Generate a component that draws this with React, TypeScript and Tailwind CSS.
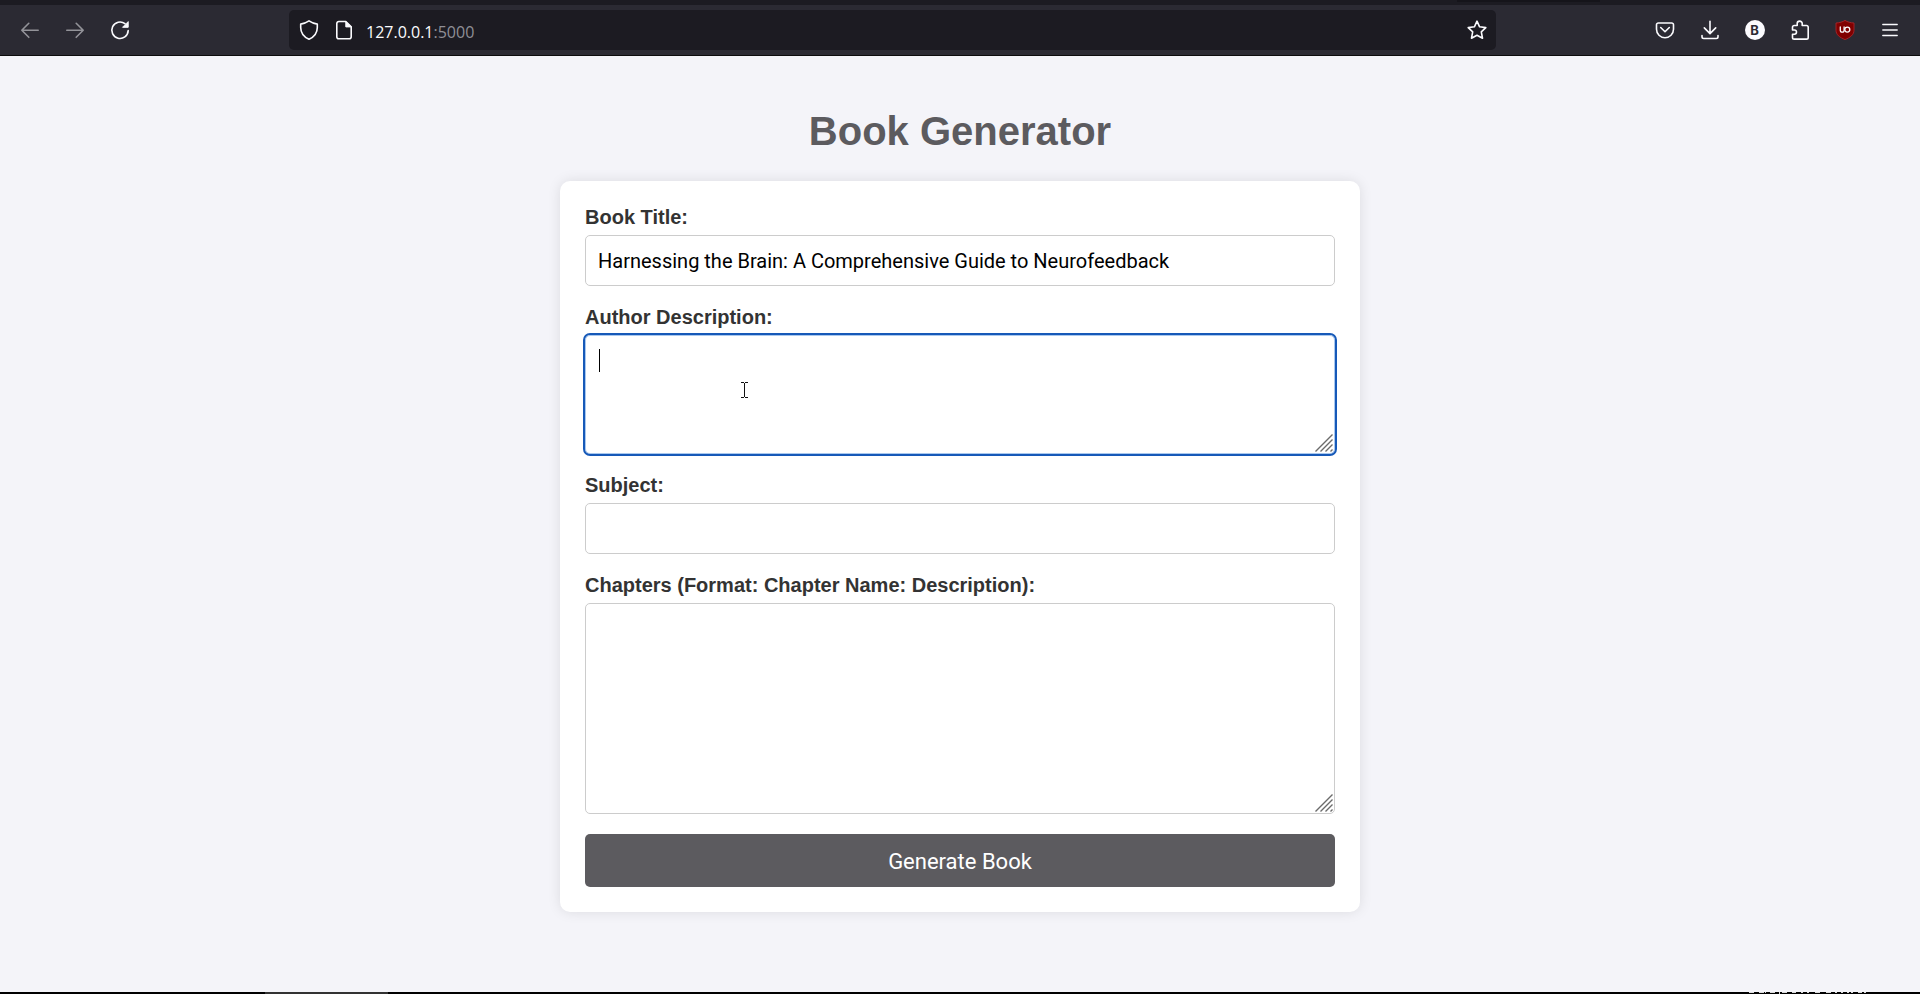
import type { ReactNode } from 'react';

const fieldClass =
  'block w-full rounded-[5px] border border-[#cccccc] bg-white px-3 pt-[13px] pb-[11px] font-[Roboto,sans-serif] text-[20px] leading-[25px] text-black outline-none';

function ToolButton({ label, children }: { label: string; children: ReactNode }) {
  return (
    <button type="button" aria-label={label} className="flex h-10 w-[45px] items-center justify-center text-[#fbfbfe]">
      {children}
    </button>
  );
}

function Icon({ children }: { children: ReactNode }) {
  return (
    <svg
      viewBox="0 0 20 20"
      className="size-5 shrink-0"
      fill="none"
      stroke="currentColor"
      strokeWidth="1.6"
      strokeLinecap="round"
      strokeLinejoin="round"
      aria-hidden="true"
    >
      {children}
    </svg>
  );
}

function ResizeGrip() {
  return (
    <svg
      viewBox="0 0 18 18"
      className="pointer-events-none absolute right-0.5 bottom-0.5 size-[18px]"
      stroke="#6b6b6b"
      strokeWidth="1.4"
      aria-hidden="true"
    >
      <path d="M.5 17.5l17-17M5.5 17.5l12-12M10.5 17.5l7-7M15.5 17.5l2-2" />
    </svg>
  );
}

function Field({ id, label, children }: { id: string; label: string; children: ReactNode }) {
  return (
    <div>
      <label htmlFor={id} className="mb-1.5 block text-[20px] leading-[23px] font-bold text-[#333333]">
        {label}
      </label>
      <div className="relative">{children}</div>
    </div>
  );
}

function BrowserBar() {
  return (
    <header>
      <div className="flex h-[5px] justify-end bg-[#1c1b22] pr-[320px]">
        <div className="h-0.5 w-[143px] bg-[#15141a]" />
      </div>
      <div className="flex h-[51px] items-center border-b border-[#0c0c0d] bg-[#2b2a33] pr-2 pl-[7px]">
        <div className="flex text-[#fbfbfe]">
          <ToolButton label="Back">
            <span className="opacity-50">
              <Icon>
                <path d="M18.2 10.3H1.8M8.8 3.3l-7 7 7 7" />
              </Icon>
            </span>
          </ToolButton>
          <ToolButton label="Forward">
            <span className="opacity-50">
              <Icon>
                <path d="M1.8 10.3h16.4M11.2 3.3l7 7-7 7" />
              </Icon>
            </span>
          </ToolButton>
          <ToolButton label="Reload">
            <Icon>
              <path d="M18.2 10.6A8.2 8.2 0 1 1 15 3.7" />
              <path d="M18.2 2v5.3h-5.3z" fill="currentColor" strokeWidth="1" />
            </Icon>
          </ToolButton>
        </div>
        <div className="mr-[146px] ml-[147px] flex h-10 min-w-0 flex-1 items-center rounded-[5px] bg-[#1c1b22] pr-[9px] pl-2.5 text-[#fbfbfe]">
          <Icon>
            <path d="M10 .9c2.6 1.8 5.2 2.8 8.3 3.2v3.3c0 5-2.700 9.200-8.300 11.800C4.400 16.600 1.700 12.400 1.700 7.400V4.100C4.800 3.700 7.400 2.700 10 .900z" />
          </Icon>
          <span className="ml-[15px] flex">
            <Icon>
              <path d="M4.800 1.500h7l5.400 5.400v9.800a2 2 0 0 1-2 2H4.800a2 2 0 0 1-2-2V3.500a2 2 0 0 1 2-2z" />
              <path d="M11.800 1.800v5.100h5.100z" fill="currentColor" strokeWidth="1" />
            </Icon>
          </span>
          <p className="ml-3 flex-1 pt-[3px] font-['Open_Sans',sans-serif] text-[16px] leading-6">
            127.0.0.1<span className="text-[#8f8f96]">:5000</span>
          </p>
          <button type="button" aria-label="Bookmark this page">
            <Icon>
              <path d="M10 1.200l2.600 5.600 6.200.8-4.500 4.300 1.200 6.300L10 15.200l-5.500 3 1.200-6.300L1.200 7.600l6.200-.8z" />
            </Icon>
          </button>
        </div>
        <div className="flex">
          <ToolButton label="Save to Pocket">
            <Icon>
              <path d="M3.300 3h13.400a1.800 1.800 0 0 1 1.800 1.800v4.400a8.500 8.500 0 0 1-17 0V4.800A1.800 1.800 0 0 1 3.300 3z" />
              <path d="M5.700 7.500L10 11.700l4.300-4.200" />
            </Icon>
          </ToolButton>
          <ToolButton label="Downloads">
            <Icon>
              <path d="M10 1.200v12.300M4.300 7.900l5.700 5.700 5.700-5.700M2 15.500v1.300A1.700 1.700 0 0 0 3.700 18.500h12.600a1.700 1.700 0 0 0 1.700-1.700v-1.300" />
            </Icon>
          </ToolButton>
          <ToolButton label="Account">
            <span className="flex size-5 items-center justify-center rounded-full bg-[#fbfbfe] font-[Inter,sans-serif] text-[13px] leading-none font-bold text-[#2b2a33]">
              B
            </span>
          </ToolButton>
          <ToolButton label="Extensions">
            <Icon>
              <path d="M7.200 5.500V3.600a2.500 2.500 0 0 1 5 0v1.900h4.300a1.700 1.700 0 0 1 1.700 1.700v10.200a1.700 1.700 0 0 1-1.700 1.700H4.200a1.700 1.700 0 0 1-1.700-1.700v-3.200h1.900a2.100 2.100 0 0 0 0-4.200H2.500V7.200a1.700 1.700 0 0 1 1.700-1.700z" />
            </Icon>
          </ToolButton>
          <ToolButton label="uBlock Origin">
            <Icon>
              <path
                d="M10 .500C12.500 2 15.500 2.800 19 3v7.200c0 4.600-3.800 7.300-9 9.400-5.200-2.100-9-4.800-9-9.400V3c3.500-.200 6.500-1 9-2.500z"
                fill="#800000"
                stroke="#a8262a"
                strokeWidth=".9"
              />
              <path d="M5.300 7v3.300a1.900 1.900 0 0 0 3.800 0V7" strokeWidth="1.300" />
              <circle cx="12.300" cy="9.600" r="2.500" strokeWidth="1.300" />
            </Icon>
          </ToolButton>
          <ToolButton label="Open application menu">
            <Icon>
              <path d="M2.800 4.500h14.400M2.800 10h14.400M2.800 15.500h14.400" strokeWidth="1.400" />
            </Icon>
          </ToolButton>
        </div>
      </div>
    </header>
  );
}

function BottomEdge() {
  return (
    <div className="flex h-0.5 bg-black pr-[52px] pl-[265px]">
      <div className="w-[123px] bg-[#333333]" />
      <svg viewBox="0 0 120 2" className="ml-auto h-0.5 w-[120px]" stroke="#d8d8d8" strokeWidth="1" aria-hidden="true">
        <path d="M1 .5h5M11 .5h5M17 .5h1M22 .5h5M34 .5h5M44 .5h4M53 .5h2M59 .5h2M67 .5h5M78 .5h5M87 .5h2M93 .5h2M99 .5h2M103 .5h2M110 .5h4M116 .5h2" />
        <path d="M31.500 0v2" />
      </svg>
    </div>
  );
}

export default function App() {
  return (
    <div className="flex min-h-screen flex-col bg-[#f4f4f9] font-['Liberation_Sans',Arial,sans-serif]">
      <BrowserBar />
      <main className="flex flex-1 flex-col items-center px-6 pt-[52px] pb-10">
        <h1 className="mb-[27px] text-[40px] leading-[46px] font-bold text-[#5c5b5f]">Book Generator</h1>
        <form
          className="flex w-full max-w-[800px] flex-col gap-5 rounded-[10px] bg-white p-[25px] shadow-[0_0_13px_rgba(0,0,0,0.1)]"
          onSubmit={(e) => e.preventDefault()}
        >
          <Field id="title" label="Book Title:">
            <input
              id="title"
              type="text"
              defaultValue="Harnessing the Brain: A Comprehensive Guide to Neurofeedback"
              className={fieldClass}
            />
          </Field>
          <Field id="author" label="Author Description:">
            <textarea
              id="author"
              className="block h-[119px] w-full resize-none rounded-[5px] border border-[#a9c8ee] bg-white p-3 font-[Roboto,sans-serif] text-[20px] leading-[25px] text-black outline-2 outline-[#1659b8]"
            />
            <span className="pointer-events-none absolute top-3.5 left-3.5 h-[23px] w-px bg-black" />
            <svg
              viewBox="0 0 7 16"
              className="pointer-events-none absolute top-[47px] left-[156px] h-4 w-[7px]"
              stroke="#111111"
              fill="none"
              aria-hidden="true"
            >
              <path d="M0 .5h3M4 .5h3M3.500 1v14M0 15.500h3M4 15.500h3" />
            </svg>
            <ResizeGrip />
          </Field>
          <Field id="subject" label="Subject:">
            <input id="subject" type="text" className={fieldClass} />
          </Field>
          <Field id="chapters" label="Chapters (Format: Chapter Name: Description):">
            <textarea id="chapters" className={`${fieldClass} h-[211px] resize-none`} />
            <ResizeGrip />
          </Field>
          <button
            type="submit"
            className="h-[53px] rounded-[5px] bg-[#5c5b5f] pt-0.5 font-[Roboto,sans-serif] text-[22px] leading-7 text-white"
          >
            Generate Book
          </button>
        </form>
      </main>
      <BottomEdge />
    </div>
  );
}
